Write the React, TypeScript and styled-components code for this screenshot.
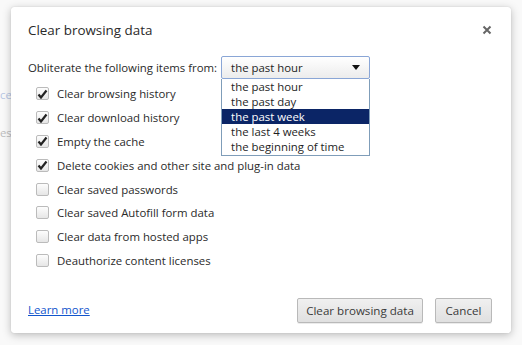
import styled, { createGlobalStyle } from 'styled-components';

const GlobalStyle = createGlobalStyle`
  html, body {
    margin: 0;
    padding: 0;
    background: #f7f7f7;
    font-family: 'Open Sans', 'Liberation Sans', sans-serif;
    color: #333;
  }
`;

const Page = styled.div`
  position: relative;
  width: 522px;
  height: 345px;
  overflow: hidden;
  background: #f9f9f9;
`;

const Backdrop = styled.div`
  display: flex;
  flex-direction: column;
  gap: 18px;
  padding: 85px 0 0 0;
  font-size: 11.3px;
`;

const BackLine = styled.div<{ $gray?: boolean }>`
  height: 20px;
  line-height: 20px;
  color: ${(p) => (p.$gray ? '#bdbdbd' : '#b7c6e4')};
`;

const Dialog = styled.div`
  position: absolute;
  left: 11px;
  top: 7px;
  width: 500px;
  height: 326px;
  background: #fff;
  border-radius: 3px;
  box-shadow: 0 2px 8px rgba(0, 0, 0, 0.25), 0 0 1px rgba(0, 0, 0, 0.2);
  display: flex;
  flex-direction: column;
  padding: 0 19px 0 17px;
  box-sizing: border-box;
`;

const Header = styled.div`
  display: flex;
  align-items: center;
  justify-content: space-between;
  height: 45px;
`;

const Title = styled.div`
  font-size: 13.4px;
  color: #2a2a2a;
`;

const Close = styled.div`
  width: 10px;
  height: 10px;
  display: flex;
`;

const FromRow = styled.div`
  display: flex;
  align-items: center;
  height: 24px;
  margin-top: 3px;
  font-size: 11.4px;
  color: #2a2a2a;
`;

const SelectWrap = styled.div`
  position: relative;
  margin-left: 4px;
`;

const SelectBox = styled.div`
  width: 149px;
  height: 23px;
  box-sizing: border-box;
  border: 1px solid #8aa6d6;
  border-radius: 2px;
  background: linear-gradient(#ffffff, #ececec);
  display: flex;
  align-items: center;
  justify-content: space-between;
  padding: 0 9px 0 9px;
  font-size: 11.4px;
  color: #1e1e1e;
`;

const Arrow = styled.div`
  width: 0;
  height: 0;
  border-left: 4.5px solid transparent;
  border-right: 4.5px solid transparent;
  border-top: 5px solid #111;
`;

const Menu = styled.div`
  position: absolute;
  left: 0;
  top: 23px;
  width: 149px;
  box-sizing: border-box;
  border: 1px solid #7f9db9;
  border-top: none;
  background: #fff;
  z-index: 2;
  padding-bottom: 1px;
`;

const MenuItem = styled.div<{ $active?: boolean }>`
  height: 15px;
  line-height: 15px;
  padding-left: 9px;
  font-size: 11.4px;
  color: ${(p) => (p.$active ? '#fff' : '#1e1e1e')};
  background: ${(p) => (p.$active ? '#0b2566' : 'transparent')};
`;

const CheckList = styled.div`
  display: flex;
  flex-direction: column;
  padding-left: 8px;
  margin-top: 3px;
`;

const CheckRow = styled.div`
  display: flex;
  align-items: center;
  height: 23.8px;
  font-size: 11.4px;
  color: #2a2a2a;
`;

const Box = styled.div`
  width: 13px;
  height: 13px;
  box-sizing: border-box;
  border: 1px solid #bbb;
  border-radius: 2px;
  background: linear-gradient(#fdfdfd, #e6e6e6);
  margin-right: 8px;
  display: flex;
  align-items: center;
  justify-content: center;
`;

const Footer = styled.div`
  margin-top: auto;
  display: flex;
  align-items: center;
  justify-content: space-between;
  height: 24px;
  margin-bottom: 11px;
`;

const Learn = styled.a`
  font-size: 11.4px;
  color: #15c;
  text-decoration: underline;
  margin-bottom: 1px;
`;

const Buttons = styled.div`
  display: flex;
  gap: 12px;
`;

const Button = styled.button<{ $w: number }>`
  width: ${(p) => p.$w}px;
  height: 25px;
  font-family: inherit;
  font-size: 11.6px;
  color: #3a3a3a;
  border: 1px solid #b9b9b9;
  border-radius: 2px;
  background: linear-gradient(#f0f0f0, #e0e0e0);
  box-shadow: 0 1px 0 rgba(0, 0, 0, 0.08);
  padding: 0;
`;

const items = [
  { label: 'Clear browsing history', on: true },
  { label: 'Clear download history', on: true },
  { label: 'Empty the cache', on: true },
  { label: 'Delete cookies and other site and plug-in data', on: true },
  { label: 'Clear saved passwords', on: false },
  { label: 'Clear saved Autofill form data', on: false },
  { label: 'Clear data from hosted apps', on: false },
  { label: 'Deauthorize content licenses', on: false },
];

const periods = [
  'the past hour',
  'the past day',
  'the past week',
  'the last 4 weeks',
  'the beginning of time',
];

const Check = () => (
  <svg width="11" height="10" viewBox="0 0 11 10">
    <path d="M1.5 5.5 L4 8.5 L9.5 1.5" fill="none" stroke="#222" strokeWidth="2.2" />
  </svg>
);

const App = () => {
  return (
    <Page>
      <GlobalStyle />
      <Backdrop>
        <BackLine>ce</BackLine>
        <BackLine $gray>es:</BackLine>
      </Backdrop>
      <Dialog>
        <Header>
          <Title>Clear browsing data</Title>
          <Close>
            <svg width="10" height="10" viewBox="0 0 10 10">
              <path d="M1.5 1.5 L8.5 8.5 M8.5 1.5 L1.5 8.5" stroke="#666" strokeWidth="2" />
            </svg>
          </Close>
        </Header>
        <FromRow>
          Obliterate the following items from:
          <SelectWrap>
            <SelectBox>
              the past hour
              <Arrow />
            </SelectBox>
            <Menu>
              {periods.map((p) => (
                <MenuItem key={p} $active={p === 'the past week'}>
                  {p}
                </MenuItem>
              ))}
            </Menu>
          </SelectWrap>
        </FromRow>
        <CheckList>
          {items.map((it) => (
            <CheckRow key={it.label}>
              <Box>{it.on && <Check />}</Box>
              {it.label}
            </CheckRow>
          ))}
        </CheckList>
        <Footer>
          <Learn href="#">Learn more</Learn>
          <Buttons>
            <Button $w={126}>Clear browsing data</Button>
            <Button $w={57}>Cancel</Button>
          </Buttons>
        </Footer>
      </Dialog>
    </Page>
  );
};

export default App;
